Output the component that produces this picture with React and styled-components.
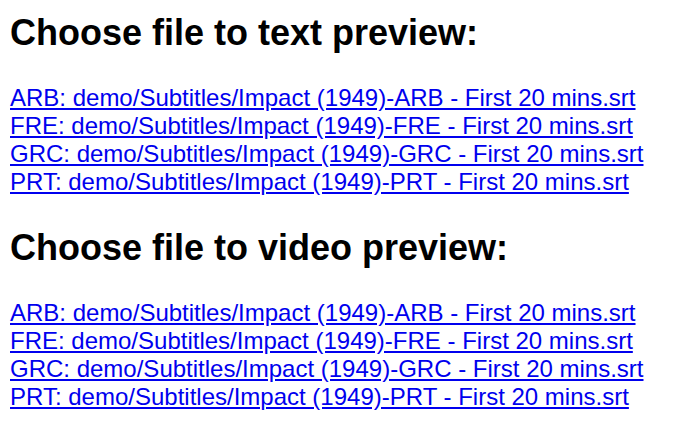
import React from "react";
import styled, { createGlobalStyle } from "styled-components";

const GlobalStyle = createGlobalStyle`
  html, body {
    margin: 0;
    padding: 0;
    background: #ffffff;
  }
  body {
    font-family: "Liberation Sans", Arial, sans-serif;
    font-size: 24px;
    color: #000000;
  }
`;

const Page = styled.div`
  display: flex;
  flex-direction: column;
  padding: 12px 10px 0 10px;
`;

const Section = styled.section`
  display: flex;
  flex-direction: column;
  align-items: flex-start;
  margin-bottom: 31px;
`;

const Heading = styled.h2`
  font-size: 36px;
  font-weight: bold;
  margin: 0 0 30px 0;
  line-height: normal;
`;

const FileLink = styled.a`
  color: #0000ee;
  text-decoration: underline;
  line-height: 28px;
  cursor: pointer;
`;

const files = [
  "ARB: demo/Subtitles/Impact (1949)-ARB - First 20 mins.srt",
  "FRE: demo/Subtitles/Impact (1949)-FRE - First 20 mins.srt",
  "GRC: demo/Subtitles/Impact (1949)-GRC - First 20 mins.srt",
  "PRT: demo/Subtitles/Impact (1949)-PRT - First 20 mins.srt",
];

function FileList({ title }) {
  return (
    <Section>
      <Heading>{title}</Heading>
      {files.map((name) => (
        <FileLink key={name} href="#">
          {name}
        </FileLink>
      ))}
    </Section>
  );
}

export default function App() {
  return (
    <>
      <GlobalStyle />
      <Page>
        <FileList title="Choose file to text preview:" />
        <FileList title="Choose file to video preview:" />
      </Page>
    </>
  );
}
